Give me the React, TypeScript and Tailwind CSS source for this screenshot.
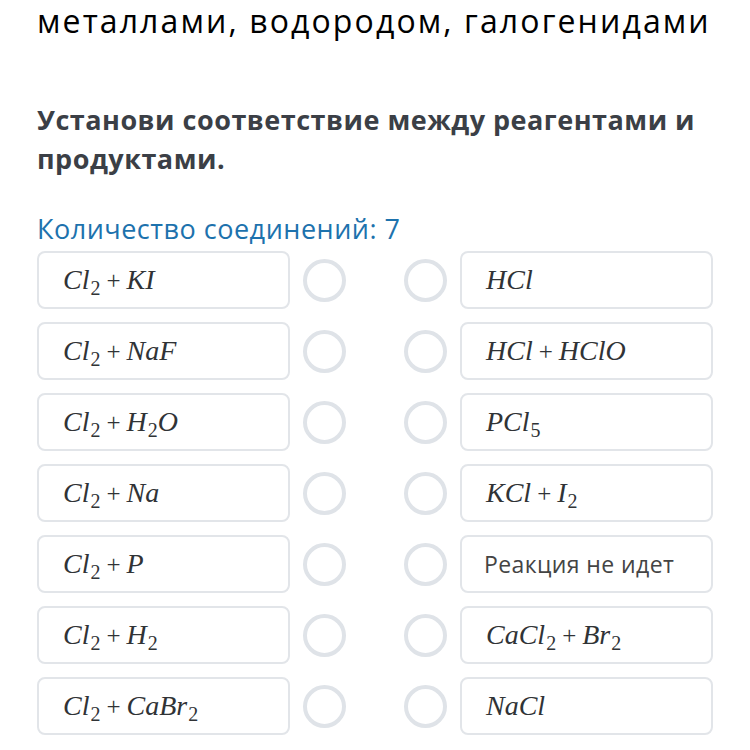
import React from "react";

type Part = { t: string; sub?: boolean; upright?: boolean };

// simple formula: letters italic, "+" and subscripts upright
function Formula({ parts }: { parts: Part[] }) {
  return (
    <span className="font-['Liberation_Serif',serif] text-[28px] text-[#303336] leading-none whitespace-nowrap">
      {parts.map((p, i) =>
        p.sub ? (
          <span key={i} className="text-[20px] not-italic relative top-[6px] ml-[1px]">
            {p.t}
          </span>
        ) : p.upright ? (
          <span key={i} className="not-italic text-[25px] mx-[6px]">
            {p.t}
          </span>
        ) : (
          <span key={i} className="italic">
            {p.t}
          </span>
        )
      )}
    </span>
  );
}

const plus: Part = { t: "+", upright: true };

const left: Part[][] = [
  [{ t: "Cl" }, { t: "2", sub: true }, plus, { t: "KI" }],
  [{ t: "Cl" }, { t: "2", sub: true }, plus, { t: "NaF" }],
  [{ t: "Cl" }, { t: "2", sub: true }, plus, { t: "H" }, { t: "2", sub: true }, { t: "O" }],
  [{ t: "Cl" }, { t: "2", sub: true }, plus, { t: "Na" }],
  [{ t: "Cl" }, { t: "2", sub: true }, plus, { t: "P" }],
  [{ t: "Cl" }, { t: "2", sub: true }, plus, { t: "H" }, { t: "2", sub: true }],
  [{ t: "Cl" }, { t: "2", sub: true }, plus, { t: "CaBr" }, { t: "2", sub: true }],
];

const right: (Part[] | string)[] = [
  [{ t: "HCl" }],
  [{ t: "HCl" }, plus, { t: "HClO" }],
  [{ t: "PCl" }, { t: "5", sub: true }],
  [{ t: "KCl" }, plus, { t: "I" }, { t: "2", sub: true }],
  "Реакция не идет",
  [{ t: "CaCl" }, { t: "2", sub: true }, plus, { t: "Br" }, { t: "2", sub: true }],
  [{ t: "NaCl" }],
];

function Circle() {
  return <div className="w-[43px] h-[43px] rounded-full border-[4px] border-[#dfe3e8] shrink-0" />;
}

function Card({ children }: { children: React.ReactNode }) {
  return (
    <div className="w-[253px] h-[58px] shrink-0 rounded-lg border-2 border-[#e2e5e9] bg-white flex items-center pl-[24px]">
      {children}
    </div>
  );
}

export default function App() {
  return (
    <div className="w-[750px] h-[750px] overflow-hidden bg-white pl-[37px] pt-[1px] font-['Open_Sans',sans-serif]">
      <h1 className="text-[32px] leading-[40px] text-black tracking-[2.1px] whitespace-nowrap">
        металлами, водородом, галогенидами
      </h1>

      <p className="mt-[59px] w-[680px] text-[27px] leading-[39px] font-bold tracking-[0.5px] text-[#3b3f46]">
        Установи соответствие между реагентами и продуктами.
      </p>

      <p className="mt-[34px] text-[27px] leading-[34px] tracking-[0.5px] text-[#1d72ad]">
        Количество соединений: 7
      </p>

      <div className="mt-[5px] flex flex-col gap-[13px]">
        {left.map((l, i) => {
          const r = right[i];
          return (
            <div key={i} className="flex items-center">
              <Card>
                <Formula parts={l} />
              </Card>
              <div className="ml-[13px]">
                <Circle />
              </div>
              <div className="ml-[58px]">
                <Circle />
              </div>
              <div className="ml-[13px]">
                <Card>
                  {typeof r === "string" ? (
                    <span className="-ml-[2px] text-[23px] tracking-[0.4px] text-[#444444]">{r}</span>
                  ) : (
                    <Formula parts={r} />
                  )}
                </Card>
              </div>
            </div>
          );
        })}
      </div>
    </div>
  );
}
